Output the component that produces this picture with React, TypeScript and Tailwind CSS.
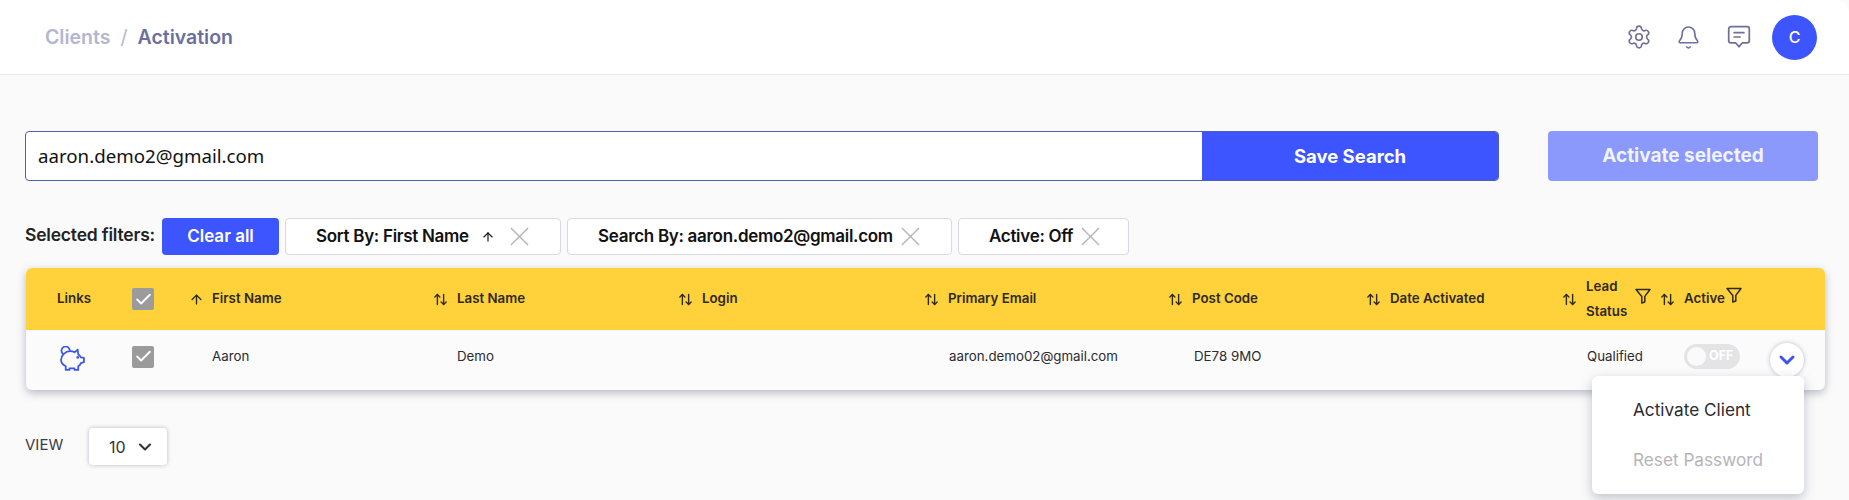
import { ArrowUp, ArrowUpDown, Bell, Check, ChevronDown, Settings } from "lucide-react";

const FONT = "font-['Inter','Liberation_Sans',sans-serif]";
const ROW_GRID = "grid grid-cols-[106px_57px_244px_245px_246px_244px_198px_196px_98px_1fr]";

function Funnel({ className }: { className?: string }) {
  return (
    <svg viewBox="0 0 16 16" fill="none" stroke="currentColor" strokeWidth="1.500" strokeLinejoin="round" className={className}>
      <path d="M1 1.500h14L9.800 8.400v5.600L6.800 15V8.400z" />
    </svg>
  );
}

function ChatIcon({ className }: { className?: string }) {
  return (
    <svg viewBox="0 0 24 24" fill="none" stroke="currentColor" strokeWidth="1.600" strokeLinecap="round" strokeLinejoin="round" className={className}>
      <path d="M4.500 2.500h15a2 2 0 0 1 2 2v11a2 2 0 0 1-2 2h-4.500L12 21l-3-3.500H4.500a2 2 0 0 1-2-2v-11a2 2 0 0 1 2-2z" />
      <path d="M7.500 8h9M7.500 12h5.500" />
    </svg>
  );
}

function PigIcon({ className }: { className?: string }) {
  return (
    <svg viewBox="0 0 24 24" fill="none" stroke="currentColor" strokeWidth="1.700" strokeLinejoin="round" strokeLinecap="round" className={className}>
      <path d="M10 5C12 5 13 5.500 14 6L17 3.500L17.500 8C19 9 19.500 10 20 11L23 11.500V15.500L20 16.500C19.500 18 18.500 19 17.500 19.500V23H14V21.500H9V23H5.500V19.500C2.500 18 1 16 1 13.500C1 9 5 5 10 5Z" />
      <path d="M2.800 7.500A4 4 0 1 1 9.400 4.900" />
      <circle cx="17" cy="11" r="0.500" fill="currentColor" />
    </svg>
  );
}

function ChipClose({ className }: { className?: string }) {
  return (
    <svg viewBox="0 0 20 20" fill="none" stroke="currentColor" strokeWidth="1.500" className={className}>
      <path d="M1 1l18 18M19 1L1 19" />
    </svg>
  );
}

function FakeCheckbox() {
  return (
    <span className="flex h-[22px] w-[22px] items-center justify-center rounded-[2px] bg-[#9b9b9b]">
      <Check size={19} strokeWidth={2.400} className="text-white" />
    </span>
  );
}

function HeaderCell({ label, sorted }: { label: string; sorted?: boolean }) {
  return (
    <div className="flex items-center">
      {sorted ? (
        <ArrowUp size={15} strokeWidth={2.200} className="mr-[8px]" />
      ) : (
        <ArrowUpDown size={15} strokeWidth={2.200} className="mr-[9px]" />
      )}
      <span>{label}</span>
    </div>
  );
}

function Chip({ label, width, arrow }: { label: string; width: string; arrow?: boolean }) {
  return (
    <div className={`flex h-[37px] items-center rounded-[4px] border border-[#d8d9e3] bg-white pl-[30px] ${width}`}>
      <span className="whitespace-nowrap text-[17px] font-semibold tracking-[-0.3px] text-[#111]">{label}</span>
      {arrow && <ArrowUp size={14} strokeWidth={2} className="ml-[12px] text-[#111]" />}
      <ChipClose className={`h-[19px] w-[19px] text-[#b4b6bb] ${arrow ? "ml-[15px]" : "ml-[8px]"}`} />
    </div>
  );
}

export default function App() {
  return (
    <div className={`h-[500px] overflow-hidden bg-[#fafafb] ${FONT}`}>
      <header className="flex h-[75px] items-center justify-between rounded-tr-[14px] border-b border-[#e8e8ec] bg-white pl-[45px] pr-[32px]">
        <div className="flex items-center pt-[2px] text-[19.500px] font-semibold">
          <span className="text-[#b4b6d0]">Clients</span>
          <span className="mx-[10px] font-normal text-[#b4b6d0]">/</span>
          <span className="text-[#6a6f9f]">Activation</span>
        </div>
        <div className="flex items-center text-[#6d7099]">
          <Settings size={26} strokeWidth={1.500} />
          <Bell size={25} strokeWidth={1.500} className="ml-[24px]" />
          <ChatIcon className="ml-[25px] h-[26px] w-[26px]" />
          <div className="ml-[20px] flex h-[45px] w-[45px] items-center justify-center rounded-full bg-[#3d55ff] text-[16px] font-medium text-white">C</div>
        </div>
      </header>

      <div className="flex pl-[25px] pr-[31px] pt-[56px]">
        <div className="flex h-[50px] w-[1474px] overflow-hidden rounded-[4px] border border-[#4f5eb5] bg-white">
          <div className="flex flex-1 items-center pl-[12px] pt-[1px] font-['Noto_Sans',sans-serif] text-[18.700px] text-[#111]">aaron.demo2@gmail.com</div>
          <button className="w-[296px] bg-[#3d55ff] pt-[2px] text-[18.500px] font-bold text-white">Save Search</button>
        </div>
        <button className="ml-[49px] h-[50px] w-[270px] rounded-[4px] bg-[#8a99fb] text-[19px] font-bold text-[#f1f3ff]">Activate selected</button>
      </div>

      <div className="flex items-center pl-[25px] pt-[37px]">
        <span className="mb-[2px] w-[137px] whitespace-nowrap text-[17.500px] font-semibold tracking-[-0.2px] text-[#222]">Selected filters:</span>
        <button className="h-[37px] w-[117px] rounded-[4px] bg-[#3d55ff] text-[17px] font-semibold text-white">Clear all</button>
        <div className="ml-[6px] flex gap-[6px]">
          <Chip label="Sort By: First Name" width="w-[276px]" arrow />
          <Chip label="Search By: aaron.demo2@gmail.com" width="w-[385px]" />
          <Chip label="Active: Off" width="w-[171px]" />
        </div>
      </div>

      <div className="relative ml-[26px] mt-[13px] w-[1799px] rounded-[6px] bg-[#fbfbfc] shadow-[0_3px_8px_rgba(60,65,90,0.35)]">
        <div className={`${ROW_GRID} h-[62px] items-center rounded-t-[6px] bg-[#ffd13b] text-[13.300px] font-semibold text-[#2f2a1c]`}>
          <div className="pl-[31px]">Links</div>
          <div><FakeCheckbox /></div>
          <HeaderCell label="First Name" sorted />
          <HeaderCell label="Last Name" />
          <HeaderCell label="Login" />
          <HeaderCell label="Primary Email" />
          <HeaderCell label="Post Code" />
          <HeaderCell label="Date Activated" />
          <div className="flex items-center">
            <ArrowUpDown size={15} strokeWidth={2.200} className="mr-[9px] shrink-0" />
            <span className="w-[42px] leading-[25px]">Lead Status</span>
            <Funnel className="mb-[6px] ml-[7px] h-[16px] w-[16px] shrink-0" />
          </div>
          <div className="flex items-center">
            <ArrowUpDown size={15} strokeWidth={2.200} className="mr-[9px]" />
            <span>Active</span>
            <Funnel className="mb-[8px] ml-[1px] h-[16px] w-[16px]" />
          </div>
        </div>

        <div className={`${ROW_GRID} h-[60px] items-center pb-[7px] text-[13.300px] text-[#2b2b30]`}>
          <div className="pl-[34px] pt-[3px]"><PigIcon className="h-[25px] w-[25px] text-[#3d55e8]" /></div>
          <div><FakeCheckbox /></div>
          <div className="pl-[23px]">Aaron</div>
          <div className="pl-[24px]">Demo</div>
          <div />
          <div className="pl-[25px]">aaron.demo02@gmail.com</div>
          <div className="pl-[26px]">DE78 9MO</div>
          <div />
          <div className="col-span-2 flex items-center pl-[25px]">
            <span className="w-[97px]">Qualified</span>
            <div className="flex h-[25px] w-[56px] items-center rounded-full bg-[#e4e4e6] pl-[3px]">
              <span className="h-[19px] w-[19px] rounded-full bg-[#fafafa]" />
              <span className="ml-[3px] text-[12.500px] font-bold text-white">OFF</span>
            </div>
          </div>
        </div>

        <button className="absolute left-[1744px] top-[75px] flex h-[34px] w-[34px] items-center justify-center rounded-full bg-white shadow-[0_0_4px_rgba(60,65,90,0.35)]">
          <ChevronDown size={24} strokeWidth={3} className="text-[#3d55e8]" />
        </button>

        <div className="absolute left-[1566px] top-[108px] z-10 flex h-[118px] w-[212px] flex-col justify-center gap-[24px] rounded-[6px] bg-white pl-[41px] text-[17.200px] shadow-[0_4px_12px_rgba(60,65,90,0.3)]">
          <span className="text-[#2b2b30]">Activate Client</span>
          <span className="text-[#b5b5b8]">Reset Password</span>
        </div>
      </div>

      <div className="flex items-center pl-[25px] pt-[36px]">
        <span className="w-[64px] text-[15px] text-[#3a3a44]">VIEW</span>
        <div className="mt-[2px] flex h-[37px] w-[78px] items-center rounded-[4px] bg-white pl-[20px] text-[16px] text-[#333] shadow-[0_0_4px_rgba(60,65,90,0.35)]">
          10
          <ChevronDown size={20} strokeWidth={2.500} className="ml-[9px]" />
        </div>
      </div>
    </div>
  );
}
